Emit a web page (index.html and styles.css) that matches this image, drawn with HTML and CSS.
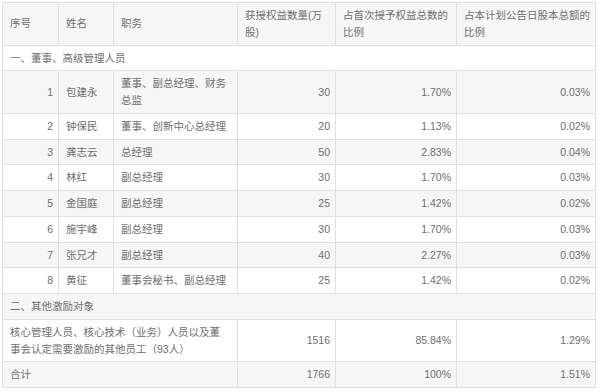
FILE: index.html
```html
<!DOCTYPE html>
<html lang="zh">
<head>
<meta charset="utf-8">
<link rel="stylesheet" href="styles.css">
</head>
<body>
<table class="grid">
  <colgroup>
    <col class="c1"><col class="c2"><col class="c3"><col class="c4"><col class="c5"><col class="c6">
  </colgroup>
  <tr class="alt"><td>序号</td><td>姓名</td><td>职务</td><td>获授权益数量(万股)</td><td>占首次授予权益总数的比例</td><td>占本计划公告日股本总额的比例</td></tr>
  <tr><td colspan="6">一、董事、高级管理人员</td></tr>
  <tr class="alt"><td class="r">1</td><td>包建永</td><td>董事、副总经理、财务总监</td><td class="r">30</td><td class="r">1.70%</td><td class="r">0.03%</td></tr>
  <tr><td class="r">2</td><td>钟保民</td><td>董事、创新中心总经理</td><td class="r">20</td><td class="r">1.13%</td><td class="r">0.02%</td></tr>
  <tr class="alt"><td class="r">3</td><td>龚志云</td><td>总经理</td><td class="r">50</td><td class="r">2.83%</td><td class="r">0.04%</td></tr>
  <tr><td class="r">4</td><td>林红</td><td>副总经理</td><td class="r">30</td><td class="r">1.70%</td><td class="r">0.03%</td></tr>
  <tr class="alt"><td class="r">5</td><td>金国庭</td><td>副总经理</td><td class="r">25</td><td class="r">1.42%</td><td class="r">0.02%</td></tr>
  <tr><td class="r">6</td><td>施宇峰</td><td>副总经理</td><td class="r">30</td><td class="r">1.70%</td><td class="r">0.03%</td></tr>
  <tr class="alt"><td class="r">7</td><td>张兄才</td><td>副总经理</td><td class="r">40</td><td class="r">2.27%</td><td class="r">0.03%</td></tr>
  <tr><td class="r">8</td><td>黄征</td><td>董事会秘书、副总经理</td><td class="r">25</td><td class="r">1.42%</td><td class="r">0.02%</td></tr>
  <tr class="alt"><td colspan="6">二、其他激励对象</td></tr>
  <tr><td colspan="3" class="wide">核心管理人员、核心技术（业务）人员以及董事会认定需要激励的其他员工（93人）</td><td class="r">1516</td><td class="r">85.84%</td><td class="r">1.29%</td></tr>
  <tr class="alt"><td colspan="3">合计</td><td class="r">1766</td><td class="r">100%</td><td class="r">1.51%</td></tr>
</table>
</body>
</html>
```
FILE: styles.css
```css
html, body {
  background: #ffffff;
}
body {
  margin: 2px;
  font-family: "Liberation Sans", "Noto Sans CJK SC", sans-serif;
  font-size: 10.5px;
  color: #6e6e6e;
}
.grid {
  border-collapse: collapse;
  table-layout: fixed;
  width: 593px;
}
.c1 { width: 56px; }
.c2 { width: 55px; }
.c3 { width: 124px; }
.c4 { width: 98px; }
.c5 { width: 121px; }
.c6 { width: 139px; }
.grid td {
  border: 1px solid #e0e0e0;
  padding: 4px 5px 4px 7px;
  line-height: 16.75px;
  vertical-align: middle;
  text-align: left;
}
.grid td.r {
  text-align: right;
}
.grid td.wide {
  padding-right: 14px;
}
.grid tr.alt td {
  background: #f6f6f6;
}
```
